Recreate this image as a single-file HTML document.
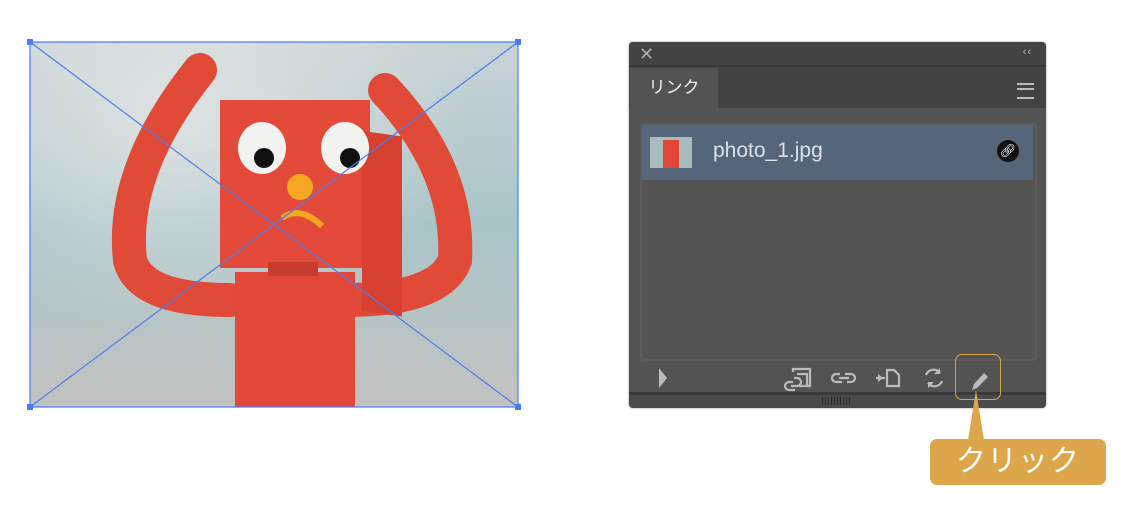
<!DOCTYPE html>
<html><head><meta charset="utf-8"><style>
body{margin:0;width:1122px;height:510px;background:#fff;position:relative;overflow:hidden;font-family:"Liberation Sans","Noto Sans CJK JP",sans-serif}
.a{position:absolute}
</style></head><body>
<svg class="a" style="left:0;top:0" width="560" height="430">
<defs>
<linearGradient id="bg" x1="0" y1="0" x2="0" y2="1">
<stop offset="0" stop-color="#c9d3d6"/><stop offset=".5" stop-color="#a9c4c8"/><stop offset=".8" stop-color="#b8c3c3"/><stop offset="1" stop-color="#c2c2c0"/></linearGradient>
<radialGradient id="lt" cx=".3" cy=".2" r=".6"><stop offset="0" stop-color="#e6e8e6" stop-opacity=".8"/><stop offset="1" stop-color="#e6e8e6" stop-opacity="0"/></radialGradient>
</defs>
<rect x="30" y="42" width="488" height="365" fill="url(#bg)"/>
<rect x="30" y="42" width="488" height="365" fill="url(#lt)"/>
<g stroke="#e24a38" fill="none" stroke-linecap="round" stroke-width="34">
<path d="M200 70 Q120 170 130 260 Q140 300 230 300"/>
<path d="M385 90 Q460 170 455 260 Q440 300 345 300"/>
</g>
<rect x="220" y="100" width="150" height="168" fill="#e44a3a"/>
<rect x="362" y="80" width="40" height="180" fill="#d84030" transform="skewY(8)"/>
<rect x="235" y="272" width="120" height="135" fill="#e24838"/>
<rect x="268" y="262" width="50" height="14" fill="#c83a2c"/>
<ellipse cx="262" cy="148" rx="24" ry="26" fill="#f2f2f0"/><circle cx="264" cy="158" r="10" fill="#111"/>
<ellipse cx="345" cy="148" rx="24" ry="26" fill="#f2f2f0"/><circle cx="350" cy="158" r="10" fill="#111"/>
<circle cx="300" cy="187" r="13" fill="#f5a623"/>
<path d="M282 218 Q300 205 322 226" stroke="#f5a623" stroke-width="6" fill="none"/>
<g stroke="#4a7df5" stroke-width="1.2" fill="none">
<rect x="30" y="42" width="488" height="365"/>
<line x1="30" y1="42" x2="518" y2="407"/><line x1="518" y1="42" x2="30" y2="407"/>
</g>
<g fill="#4a7df5"><rect x="27" y="39" width="6" height="6"/><rect x="515" y="39" width="6" height="6"/><rect x="27" y="404" width="6" height="6"/><rect x="515" y="404" width="6" height="6"/></g>
</svg>

<div class="a" style="left:629px;top:42px;width:417px;height:366px;background:#535353;border-radius:4px;overflow:hidden;box-shadow:0 0 2px #999">
<div class="a" style="left:0;top:0;width:417px;height:66px;background:#434343"></div>
<div class="a" style="left:0;top:23px;width:417px;height:2px;background:#383838"></div>
<div class="a" style="left:10px;top:2px;color:#aaa;font-size:18px">✕</div>
<div class="a" style="right:14px;top:4px;color:#bbb;font-size:11px;letter-spacing:1px">‹‹</div>
<div class="a" style="left:1px;top:26px;width:88px;height:46px;background:#535353;color:#eee;font-size:17px;line-height:40px;text-align:center">リンク</div>
<div class="a" style="right:12px;top:41px;width:17px;height:12px;border-top:2px solid #bbb;border-bottom:2px solid #bbb"><div style="margin-top:3px;height:2px;background:#bbb"></div></div>
<div class="a" style="left:11px;top:81px;width:393px;height:234px;border:2px solid #5c5c5c;border-radius:4px"></div>
<div class="a" style="left:13px;top:83px;width:391px;height:55px;background:#55657a"></div>
<div class="a" style="left:21px;top:95px;width:42px;height:31px;background:#a8bcbc"><div style="margin:3px 0 0 13px;width:16px;height:28px;background:#e04535"></div></div>
<div class="a" style="left:84px;top:97px;color:#dde0e4;font-size:21px">photo_1.jpg</div>
<div class="a" style="left:368px;top:98px;width:22px;height:22px;border-radius:50%;background:#111;color:#fff;font-size:13px;text-align:center;line-height:22px">🔗︎</div>
<svg class="a" style="left:0;top:320px" width="417" height="46">
<path d="M30 6 L38 16 L30 26Z" fill="#bbb"/>
<g stroke="#bbb" stroke-width="2.2" fill="none">
<path d="M164 10 v-3 h17 v17 h-3"/><path d="M168 12 h10 v12 h-8"/>
<path d="M164 20 h-4 a4 4 0 0 0 0 8 h6 M162 24 h6 a4 4 0 0 0 0-8 h-3"/>
<path d="M211 12 h-4 a4 4 0 0 0 0 8 h6 M218 20 h4 a4 4 0 0 0 0-8 h-6 M210 16 h10"/>
<path d="M258 8 h7 l5 5 v11 h-12 z"/><path d="M247 16 h9"/>
<path d="M297 13 a8 8 0 0 1 14 -2 M313 19 a8 8 0 0 1 -14 2"/>
</g>
<path d="M249 12 l5 4 -5 4z M311 6 v6 h-6z M299 26 v-6 h6z" fill="#bbb"/>
<path d="M343 28 l2-6 10-11 4 4 -11 11z" fill="#bbb"/>
<rect x="0" y="30" width="417" height="3" fill="#3a3a3a"/>
<rect x="0" y="33" width="417" height="13" fill="#4a4a4a"/>
<g fill="#2c2c2c"><rect x="193" y="35" width="1" height="8"/><rect x="196" y="35" width="1" height="8"/><rect x="199" y="35" width="1" height="8"/><rect x="202" y="35" width="1" height="8"/><rect x="205" y="35" width="1" height="8"/><rect x="208" y="35" width="1" height="8"/><rect x="211" y="35" width="1" height="8"/><rect x="214" y="35" width="1" height="8"/><rect x="217" y="35" width="1" height="8"/><rect x="220" y="35" width="1" height="8"/></g>
</svg>
</div>
<div class="a" style="left:955px;top:354px;width:44px;height:44px;border:1.5px solid #d9a640;border-radius:7px"></div>
<svg class="a" style="left:950px;top:390px" width="50" height="60"><path d="M18 50 L26 0 L34 50Z" fill="#dda64a"/></svg>
<div class="a" style="left:930px;top:439px;width:176px;height:46px;background:#dda64a;border-radius:7px;color:#fff;font-size:30px;line-height:46px;text-align:center;letter-spacing:1px">クリック</div>
</body></html>
